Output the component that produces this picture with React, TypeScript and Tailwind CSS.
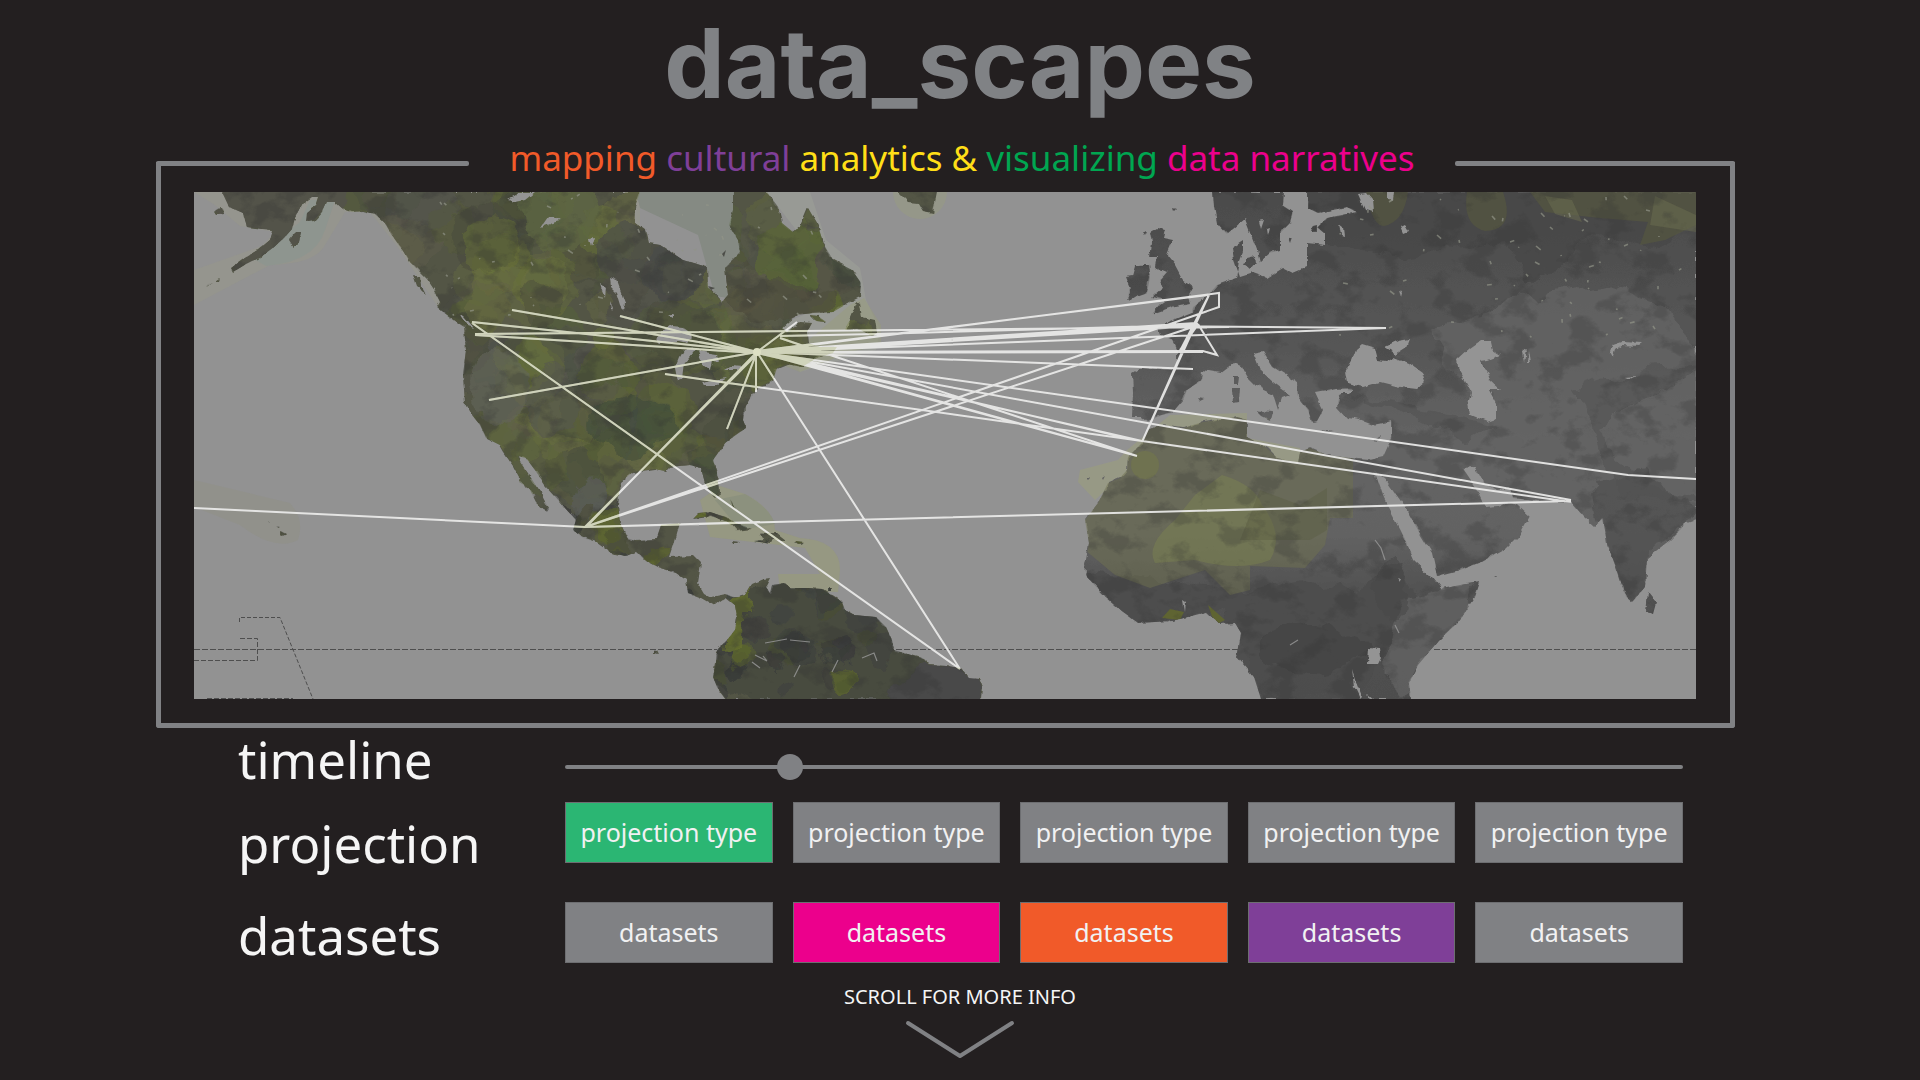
import { useState } from "react";

const AMERICAS =
  "M222 192L229 207L243 213L247 227L262 229L273 230L270 240L258 250L245 258L231 268L233 272L246 264L262 256L274 247L284 238L292 229L295 217L302 204L312 197L319 197L316 206L307 213L306 221L314 220L322 211L326 202L335 202L343 209L352 212L363 211L375 214L385 223L391 234L398 244L404 252L410 262L418 270L427 279L435 291L441 303L438 308L450 317L461 325L474 333L473 324L464 318L468 328L464 328L466 350L463 375L465 402L472 415L480 425L486 438L500 445L504 452L513 465L520 478L519 482L529 488L536 502L547 512L549 509L540 492L531 478L520 462L518 456L526 458L535 470L545 485L554 495L565 508L576 520L573 530L583 538L597 543L611 553L626 556L636 552L645 560L658 567L676 573L686 580L688 593L701 598L715 606L720 602L726 598L735 605L737 617L735 630L727 640L717 650L716 663L713 677L717 687L726 699L981 699L982 687L979 679L969 678L960 668L947 666L929 665L922 658L904 653L894 650L892 640L886 627L876 617L854 615L845 610L842 602L831 595L822 589L808 588L790 588L785 583L772 585L770 593L766 587L770 579L763 580L751 585L745 595L735 598L726 594L711 597L704 593L698 583L701 563L694 556L670 557L674 545L677 533L680 523L661 525L656 540L636 541L627 538L620 523L618 505L620 482L633 472L654 469L665 471L669 467L690 465L701 468L705 483L715 498L719 492L717 473L713 460L726 442L743 430L746 428L743 420L745 407L752 395L757 388L773 380L777 368L787 364L802 367L817 358L833 353L837 347L820 347L808 343L807 332L812 323L800 322L787 332L782 328L797 315L813 313L833 312L850 302L860 297L861 283L852 270L833 260L823 243L818 225L808 208L800 227L793 232L782 223L778 207L767 192L733 192L733 210L729 225L738 240L740 253L725 268L728 295L722 302L708 287L707 267L683 260L660 245L648 243L645 230L635 223L635 207L640 192Z" +
  "M857 301L852 313L845 330L857 328L872 336L877 333L875 320L862 317L860 303Z" +
  "M810 315L818 316L826 322L816 321Z" +
  "M413 275L420 277L421 285L426 294L417 287Z" +
  "M289 240L296 232L301 232L299 242L293 246ZM214 211L222 208L224 214L217 215Z" +
  "M206 286L212 281L208 285ZM215 281L219 278L218 281Z" +
  "M898 192L908 202L918 203L923 211L933 213L937 192Z" +
  "M694 518L699 513L710 512L726 517L736 523L752 529L736 531L728 522L711 516Z" +
  "M760 533L777 533L786 540L775 540L771 544L754 541L764 540ZM732 541L741 542L738 544L733 544ZM795 541L803 542L799 544Z" +
  "M730 499L733 507L735 509L732 503ZM828 588L831 588L831 591L828 591Z" +
  "M281 531L287 534L284 537L281 536ZM268 522L270 522L270 523ZM276 526L280 526L278 527ZM654 650L656 650L658 654L654 653Z";

const OLD_WORLD =
  "M1308 192L1308 208L1318 213L1347 207L1357 212L1327 218L1318 227L1325 233L1325 245L1307 243L1307 267L1293 273L1283 268L1267 278L1253 273L1240 277L1234 260L1232 247L1243 240L1243 252L1240 260L1237 278L1217 285L1210 293L1203 300L1193 307L1192 313L1175 320L1157 327L1160 335L1172 340L1177 350L1177 370L1140 368L1132 373L1133 393L1132 417L1142 417L1148 422L1157 417L1172 413L1183 400L1187 390L1202 380L1203 370L1220 373L1233 363L1242 367L1247 377L1256 386L1273 394L1278 410L1282 398L1290 395L1273 382L1260 370L1253 353L1263 351L1273 367L1297 382L1298 397L1308 410L1312 422L1317 421L1323 410L1315 393L1337 389L1353 388L1340 394L1337 407L1347 418L1360 420L1373 425L1392 421L1392 437L1383 457L1370 460L1357 459L1327 455L1310 448L1300 452L1298 463L1277 458L1267 448L1247 437L1247 420L1237 417L1203 422L1183 428L1160 425L1148 430L1142 443L1128 457L1127 470L1120 478L1108 483L1098 503L1085 520L1089 543L1085 565L1087 577L1106 597L1122 611L1138 623L1172 621L1207 612L1220 624L1235 623L1241 633L1237 657L1254 677L1261 699L1411 699L1409 683L1418 665L1439 640L1460 620L1475 597L1480 582L1460 585L1441 589L1432 577L1414 560L1401 530L1384 498L1374 470L1386 480L1405 507L1422 537L1432 553L1437 576L1460 570L1481 562L1506 548L1521 533L1530 517L1517 505L1508 502L1498 506L1485 507L1475 487L1462 468L1475 467L1485 485L1497 490L1510 488L1513 498L1544 502L1571 502L1584 517L1594 526L1603 518L1607 543L1618 573L1626 597L1632 602L1645 587L1647 558L1670 540L1687 523L1696 520L1696 192Z" +
  "M1213 192L1214 207L1217 223L1227 234L1245 219L1252 237L1257 250L1260 262L1270 253L1280 250L1280 233L1290 223L1293 212L1283 205L1284 192Z" +
  "M1150 232L1157 228L1165 230L1163 238L1173 240L1167 255L1175 265L1183 280L1193 288L1188 297L1190 303L1175 306L1152 314L1160 305L1167 300L1153 297L1163 288L1160 280L1167 272L1155 267L1157 257L1150 257L1152 243Z" +
  "M1135 265L1148 265L1150 277L1147 293L1127 300L1130 287L1126 277L1132 276Z" +
  "M1232 388L1240 388L1239 402L1233 403ZM1234 376L1239 376L1238 384L1234 384ZM1257 411L1272 412L1270 420L1262 416ZM1198 398L1204 399L1200 401ZM1320 430L1334 432L1326 433ZM1372 440L1381 435L1378 441Z" +
  "M1247 258L1255 256L1256 262L1250 269L1244 264ZM1289 238L1293 237L1291 243ZM1313 226L1317 225L1317 232L1312 232ZM1174 208L1177 209L1175 211ZM1143 232L1147 231L1145 235Z" +
  "M1648 593L1656 603L1653 614L1646 612ZM1494 576L1497 576L1496 577ZM1086 478L1090 478L1088 480ZM1101 477L1104 475L1102 479Z";

const LAKES =
  "M655 338L664 331L672 325L682 326L688 330L693 337L687 343L679 341L670 341L660 343Z" +
  "M678 382L675 367L679 357L683 350L697 348L690 357L685 363L683 380Z" +
  "M698 352L717 355L720 361L712 360L710 371L704 366Z M700 382L727 378L716 385L703 385Z M723 371L732 366L743 367L737 371Z" +
  "M610 278L617 281L621 292L625 303L624 312L620 305L616 292L611 287Z M600 283L606 287L605 297L602 290Z M611 301L614 308L612 312Z" +
  "M508 200L516 196L518 192L534 192L524 200L515 202Z M541 227L548 217L553 217L560 221L552 223Z M589 238L594 237L591 248ZM668 316L673 313L673 319ZM460 314L464 316L474 328L468 326Z" +
  "M1362 344L1375 348L1378 360L1385 361L1393 357L1408 363L1422 373L1425 382L1417 389L1400 387L1380 382L1363 387L1347 383L1345 372L1352 360L1356 349Z" +
  "M1385 347L1398 341L1410 339L1407 347L1396 354Z M1340 390L1353 389L1349 393L1341 393Z" +
  "M1480 341L1490 341L1492 350L1500 355L1487 360L1480 361L1488 374L1490 381L1500 390L1489 390L1496 403L1496 419L1487 422L1470 415L1468 403L1471 392L1458 368L1457 360L1470 348Z" +
  "M1359 194L1366 193L1372 200L1373 212L1366 210ZM1388 192L1394 192L1393 200L1388 199ZM1401 226L1405 224L1409 231L1404 233Z M1259 221L1264 220L1261 229ZM1267 229L1270 228L1268 236ZM1340 225L1344 228L1345 236L1342 235Z" +
  "M1610 352L1613 345L1622 342L1642 343L1638 346L1622 345L1615 350L1613 357Z M1522 352L1526 349L1524 362ZM1529 350L1531 362L1528 362Z M1625 377L1636 376L1630 379ZM1400 290L1403 294L1402 298Z" +
  "M1369 648L1380 649L1381 657L1378 663L1368 663Z M1352 670L1355 680L1362 697L1360 699L1354 686ZM1367 694L1373 699L1369 699ZM1182 600L1185 602L1184 612ZM1398 579L1401 580L1400 582Z";

type Blob = { x: number; y: number; r: number; fill: string; o: number };

function makeRandom(seed: number) {
  let s = seed;
  return () => {
    s = (s * 16807) % 2147483647;
    return s / 2147483647;
  };
}

function scatter(seed: number, count: number, box: number[], radius: number[], colours: string[], alpha: number): Blob[] {
  const rnd = makeRandom(seed);
  return Array.from({ length: count }, () => ({
    x: box[0] + rnd() * (box[2] - box[0]),
    y: box[1] + rnd() * (box[3] - box[1]),
    r: radius[0] + rnd() * (radius[1] - radius[0]),
    fill: colours[Math.floor(rnd() * colours.length)],
    o: alpha * (0.5 + rnd() * 0.5),
  }));
}

const GREENS = ["#5f6a30", "#5a6636", "#6b7042", "#484b3c", "#5f5d4c", "#475040", "#545450", "#6d7838"];
const westBlobs = scatter(77123, 200, [330, 192, 870, 500], [10, 36], GREENS, 0.5);
const southBlobs = scatter(91541, 130, [560, 500, 930, 699], [5, 16], ["#393b39", "#5e672e", "#4a4e34", "#3a3c3b", "#626e2a", "#404340"], 0.75);

const slivers = (() => {
  const rnd = makeRandom(4242);
  return Array.from({ length: 110 }, (_, i) => {
    const west = i < 50;
    const x = west ? 440 + rnd() * 380 : 1340 + rnd() * 350;
    const y = west ? 196 + rnd() * 120 : 196 + rnd() * 140;
    return `M${x.toFixed(0)} ${y.toFixed(0)}l${(rnd() * 6 - 1).toFixed(1)} ${(rnd() * 6 - 2).toFixed(1)}`;
  }).join("");
})();

const ROUTES = [
  "M512 310L757 352", "M620 316L757 352", "M472 322L757 352", "M475 335L757 353", "M475 334L1229 327", "M489 400L757 352",
  "M665 374L1142 441", "M472 323L960 669", "M757 352L960 669", "M759 352L585 527", "M757 352L586 527", "M757 352L727 429",
  "M756 352L756 392", "M797 322L757 352", "M780 338L836 357L1137 456", "M780 336L876 334L1195 325",
  "M585 527L1219 307V293L757 352", "M585 527L1193 327L1142 442L1209 295L1180 351", "M1197 326L1180 350", "M757 351L1208 295",
  "M194 508L585 527L1571 501", "M585 527L760 522", "M757 352L1571 500", "M757 352L1628 475L1696 479", "M757 353L1142 441L1571 502",
  "M757 351L1135 440", "M757 352L1137 456", "M790 360L1130 454", "M757 352L1203 351L1217 355L1198 324", "M757 352L1193 369",
  "M757 352L1198 324", "M757 353L1198 326", "M757 351L1196 323", "M757 352L1386 328", "M1150 326L1386 328", "M757 353L1203 352",
];

function BlobLayer({ blobs }: { blobs: Blob[] }) {
  return (
    <>
      {blobs.map((b, i) => (
        <circle key={i} cx={b.x} cy={b.y} r={b.r} fill={b.fill} opacity={b.o} />
      ))}
    </>
  );
}

function WorldMap() {
  return (
    <svg viewBox="194 192 1502 507" className="block h-auto w-full" role="img" aria-label="World map with routes between cities">
      <defs>
        <filter id="rough" x="0" y="0" width="100%" height="100%">
          <feTurbulence type="fractalNoise" baseFrequency="0.09" numOctaves="3" seed="4" result="n" />
          <feDisplacementMap in="SourceGraphic" in2="n" scale="6" xChannelSelector="R" yChannelSelector="G" />
        </filter>
        <filter id="wavy" x="0" y="0" width="100%" height="100%">
          <feTurbulence type="fractalNoise" baseFrequency="0.03" numOctaves="4" seed="9" result="n" />
          <feDisplacementMap in="SourceGraphic" in2="n" scale="28" xChannelSelector="R" yChannelSelector="G" />
        </filter>
        <filter id="relief" x="0" y="0" width="100%" height="100%" colorInterpolationFilters="sRGB">
          <feTurbulence type="fractalNoise" baseFrequency="0.03 0.04" numOctaves="5" seed="21" />
          <feColorMatrix values="0 0 0 0 0.2  0 0 0 0 0.2  0 0 0 0 0.2  7 0 0 0 -3.6" />
        </filter>
        <clipPath id="west"><path d={AMERICAS} /></clipPath>
        <clipPath id="east"><path d={OLD_WORLD} /></clipPath>
        <linearGradient id="eastFill" x1="0" y1="0" x2="0" y2="1">
          <stop offset="0" stopColor="#4b4b4b" />
          <stop offset="0.3" stopColor="#565656" />
          <stop offset="0.5" stopColor="#646464" />
          <stop offset="0.68" stopColor="#626262" />
          <stop offset="0.78" stopColor="#525252" />
          <stop offset="1" stopColor="#4e4e4e" />
        </linearGradient>
      </defs>
      <rect x="194" y="192" width="1502" height="507" fill="#929292" />

      {/* shallow waters */}
      <g>
        <path d="M194 192H640V240L440 310L400 250L370 212L345 212L325 245Q315 264 270 265L194 305V270L262 246L275 232L240 226L215 205Z" fill="#9a9c86" opacity="0.35" />
        <path d="M335 200L325 230Q315 262 266 266L252 258L300 222L310 200Z" fill="#8c9690" opacity="0.7" />
        <path d="M636 192H736L742 252L725 275L728 298L715 296L698 235L640 208Z" fill="#858a83" />
        <path d="M767 192H810L826 240L860 268L866 300L880 330L876 350L800 372L780 325L850 295L800 235Z" fill="#a0a59a" opacity="0.45" />
        <path d="M805 343L850 305L864 298L881 325V345L850 352L800 372L785 366Z" fill="#979c7b" opacity="0.5" />
        <circle cx="920" cy="192" r="27" fill="#979b83" opacity="0.6" />
        <path d="M700 500L720 486L745 494Q775 510 775 530L800 538Q840 540 840 570L838 592L780 590L778 574L820 574L805 548L710 537Z" fill="#9a9e72" opacity="0.5" />
        <path d="M715 500L745 494Q770 508 775 524L740 530Z" fill="#858c7c" opacity="0.6" />
        <path d="M194 480L290 503Q305 520 298 540Q275 552 240 525L194 507Z" fill="#8f9077" opacity="0.25" />
        <path d="M1127 450L1170 415L1247 413V438L1300 448L1300 466L1200 450L1108 488L1095 500L1078 482L1080 470L1118 460Z" fill="#9a9d80" opacity="0.7" />
      </g>

      {/* land */}
      <g filter="url(#rough)">
        <path d={AMERICAS} fill="#525445" />
        <path d={OLD_WORLD} fill="url(#eastFill)" />
      </g>
      <g clipPath="url(#west)">
        <g filter="url(#wavy)">
          <BlobLayer blobs={westBlobs} />
          <circle cx="672" cy="272" r="30" fill="#494a48" opacity="0.85" />
          <circle cx="628" cy="255" r="32" fill="#4d4e49" opacity="0.7" />
          <circle cx="790" cy="255" r="34" fill="#5a6638" opacity="0.8" />
          <circle cx="560" cy="215" r="38" fill="#5e6742" opacity="0.8" />
          <path d="M215 185H350L330 230L250 280L225 260Z" fill="#53524a" />
          <ellipse cx="630" cy="425" rx="45" ry="28" fill="#3b4a3a" opacity="0.5" />
          <ellipse cx="780" cy="300" rx="60" ry="18" fill="#50503f" opacity="0.7" />
          <ellipse cx="500" cy="385" rx="28" ry="40" fill="#64655a" opacity="0.6" />
          <ellipse cx="550" cy="400" rx="26" ry="34" fill="#57584f" opacity="0.6" />
          <ellipse cx="590" cy="500" rx="18" ry="26" fill="#5a5c57" opacity="0.8" />
          <ellipse cx="850" cy="650" rx="150" ry="70" fill="#40423e" opacity="0.6" />
          <BlobLayer blobs={southBlobs} />
          <ellipse cx="940" cy="690" rx="50" ry="26" fill="#4a4a4a" />
          <path d="M728 600L750 590L745 650L720 655Z" fill="#66702f" opacity="0.8" />
        </g>
      </g>
      <g clipPath="url(#east)">
        <g filter="url(#wavy)">
          <path d="M1280 180H1700V230L1650 250L1600 235L1530 285L1505 240L1400 260L1300 235Z" fill="#474747" opacity="0.8" />
          <path d="M1430 330L1520 300L1610 285L1670 310L1700 360V440L1600 430L1500 440L1440 350Z" fill="#646464" opacity="0.8" />
          <path d="M1350 395L1500 425L1470 440L1400 415ZM1575 390L1640 370L1700 365L1650 395L1600 430L1640 480L1710 500L1620 500Z" fill="#4f4f4f" opacity="0.5" />
          <path d="M1590 480L1640 470L1700 510L1690 530L1650 550L1635 605L1600 540Z" fill="#535353" opacity="0.8" />
          <path d="M1080 570L1150 578L1250 590L1300 580L1360 590L1400 560L1420 600L1390 640L1360 699H1255L1230 615L1140 630Z" fill="#4d4d4d" opacity="0.9" />
          <ellipse cx="1310" cy="650" rx="52" ry="26" fill="#454545" opacity="0.7" />
          <path d="M1400 600L1480 580L1440 650L1400 699L1385 660Z" fill="#626262" opacity="0.8" />
          <ellipse cx="1393" cy="590" rx="16" ry="30" fill="#4c4c4c" opacity="0.7" />
        </g>
        <path d="M1148 425L1250 412L1353 450V518H1330L1325 545L1305 568L1250 566L1250 590L1230 595L1205 570L1150 588L1115 575L1085 550V500L1128 455Z" fill="#70724f" opacity="0.5" />
        <path d="M1222 475Q1255 485 1262 505Q1285 535 1270 560Q1240 572 1195 560L1155 563Q1145 545 1175 520L1195 495Z" fill="#7f8550" opacity="0.45" />
        <path d="M1240 540L1260 490L1300 505L1327 488L1327 530L1310 540Z" fill="#5a5c42" opacity="0.4" />
        <circle cx="1145" cy="465" r="14" fill="#7b823e" opacity="0.35" />
        <path d="M1162 618L1170 609L1184 612L1180 620ZM1208 605L1225 620L1215 625Z" fill="#5f6432" />
        <path d="M1366 192H1408Q1404 222 1384 226Q1372 226 1366 192ZM1467 192H1503Q1516 230 1485 231Q1462 225 1467 192ZM1530 192H1696V225L1665 240L1640 245L1648 222L1600 218L1545 212Z" fill="#5a5c3c" opacity="0.5" />
        <path d="M1545 196L1572 200L1582 222L1555 214ZM1655 196L1696 215V232L1650 225Z" fill="#6c6e50" opacity="0.5" />
      </g>
      <g clipPath="url(#west)" opacity="0.3"><rect x="194" y="192" width="800" height="507" filter="url(#relief)" /></g>
      <g clipPath="url(#east)" opacity="0.25"><rect x="1070" y="192" width="626" height="507" filter="url(#relief)" /></g>

      {/* lakes and inland seas */}
      <g filter="url(#rough)"><path d={LAKES} fill="#949494" /></g>
      <path d={slivers} stroke="#929488" strokeWidth="1.6" fill="none" opacity="0.7" />
      <path d="M755 655l12 6l-4 -5M790 640l20 2M765 643l22 -4M832 672l6 -12M862 658l12 -5l3 8M1375 540l6 8l4 12M1290 645l8 -5M1395 625l4 8M752 662l8 6M800 665l-6 12" stroke="#9a9a9a" strokeWidth="1.2" fill="none" opacity="0.8" />
      <path d="M708 286L715 288L711 290ZM722 254L726 250L724 257Z" fill="#4c4d48" />

      {/* equator and boundaries */}
      <g fill="none" stroke="#4e4e4e" strokeWidth="1">
        <path d="M194 649.5H717M896 649.5H1238M1434 649.5H1696" strokeDasharray="6 2" />
        <path d="M239.500 622V617.500H280L313 699" strokeDasharray="4 2" />
        <path d="M240 638.500H257.500V660.500H194M207 698.500H293" strokeDasharray="5 2" />
      </g>

      <g fill="none" stroke="#ececea" strokeWidth="2" opacity="0.92">
        <path d={ROUTES.join("")} />
      </g>
      <g clipPath="url(#west)" fill="none" stroke="#b9c08a" strokeWidth="2" opacity="0.4">
        <path d={ROUTES.join("")} />
      </g>
      <circle cx="757" cy="352" r="4" fill="#dde0c4" />
    </svg>
  );
}

const swatch = {
  grey: "bg-[#808184]",
  green: "bg-[#2bb673]",
  pink: "bg-[#ec008c]",
  orange: "bg-[#f15a29]",
  purple: "bg-[#7f3f98]",
};

function ButtonRow({ label, text, colours, className, labelClass }: { label: string; text: string; colours: (keyof typeof swatch)[]; className: string; labelClass: string }) {
  return (
    <div role="group" aria-label={label} className={`grid grid-cols-[327px_1fr] items-start ${className}`}>
      <h2 className={`text-[51px] leading-[50px] ${labelClass}`}>{label}</h2>
      <div className="grid grid-cols-5 gap-5">
        {colours.map((c, i) => (
          <button key={i} type="button" className={`h-[61px] whitespace-nowrap border border-[#6d6e71] text-[25px] text-[#f1f1f2] ${swatch[c]}`}>
            {text}
          </button>
        ))}
      </div>
    </div>
  );
}

export default function App() {
  const [time, setTime] = useState(194);
  return (
    <main className="min-h-screen bg-[#231f20] pt-[15px] font-['Noto_Sans',sans-serif] text-[#f5f5f5]">
      <h1 className="text-center font-['Inter',sans-serif] text-[96px] leading-[96px] font-bold text-[#808285]">data_scapes</h1>

      <section className="mt-6 mr-[185px] ml-[156px]">
        <div className="flex items-center">
          <span className="mt-3 h-[5px] w-[313px] rounded-[2px] bg-[#808184]" />
          <p className="flex-1 text-center text-[35px] leading-[45px] whitespace-nowrap">
            <span className="text-[#f15a29]">mapping</span> <span className="text-[#7f3f98]">cultural</span>{" "}
            <span className="text-[#ffde17]">analytics &amp;</span> <span className="text-[#00a651]">visualizing</span>{" "}
            <span className="text-[#ec008c]">data narratives</span>
          </p>
          <span className="mt-3 h-[5px] w-[280px] rounded-[2px] bg-[#808184]" />
        </div>
        <div className="-mt-[18px] rounded-b-[3px] border-x-[5px] border-b-[5px] border-[#808184] pt-[30px] pr-[34px] pb-6 pl-[33px]">
          <WorldMap />
        </div>
      </section>

      <section className="mr-[237px] ml-[238px] mt-1.5">
        <div className="grid grid-cols-[327px_1fr] items-start">
          <label htmlFor="timeline" className="text-[51px] leading-[50px]">timeline</label>
          <input
            id="timeline"
            type="range"
            min={0}
            max={1000}
            value={time}
            onChange={(e) => setTime(Number(e.target.value))}
            className="mt-5 h-[26px] w-full cursor-pointer appearance-none bg-transparent [&::-webkit-slider-runnable-track]:h-[4px] [&::-webkit-slider-runnable-track]:rounded-full [&::-webkit-slider-runnable-track]:bg-[#808184] [&::-webkit-slider-thumb]:-mt-[11px] [&::-webkit-slider-thumb]:h-[26px] [&::-webkit-slider-thumb]:w-[26px] [&::-webkit-slider-thumb]:appearance-none [&::-webkit-slider-thumb]:rounded-full [&::-webkit-slider-thumb]:bg-[#808184]"
          />
        </div>
        <ButtonRow label="projection" text="projection type" colours={["green", "grey", "grey", "grey", "grey"]} className="mt-[18px]" labelClass="mt-4" />
        <ButtonRow label="datasets" text="datasets" colours={["grey", "pink", "orange", "purple", "grey"]} className="mt-[34px]" labelClass="mt-2" />
      </section>

      <a href="#info" className="mx-auto mt-5 flex w-fit flex-col items-center text-xl leading-7">
        SCROLL FOR MORE INFO
        <svg viewBox="0 0 112 40" className="mt-2 h-10 w-28" fill="none" stroke="#808184" strokeWidth="4" strokeLinecap="round" strokeLinejoin="round" aria-hidden="true">
          <path d="M4 4L56 37L108 4" />
        </svg>
      </a>
    </main>
  );
}
